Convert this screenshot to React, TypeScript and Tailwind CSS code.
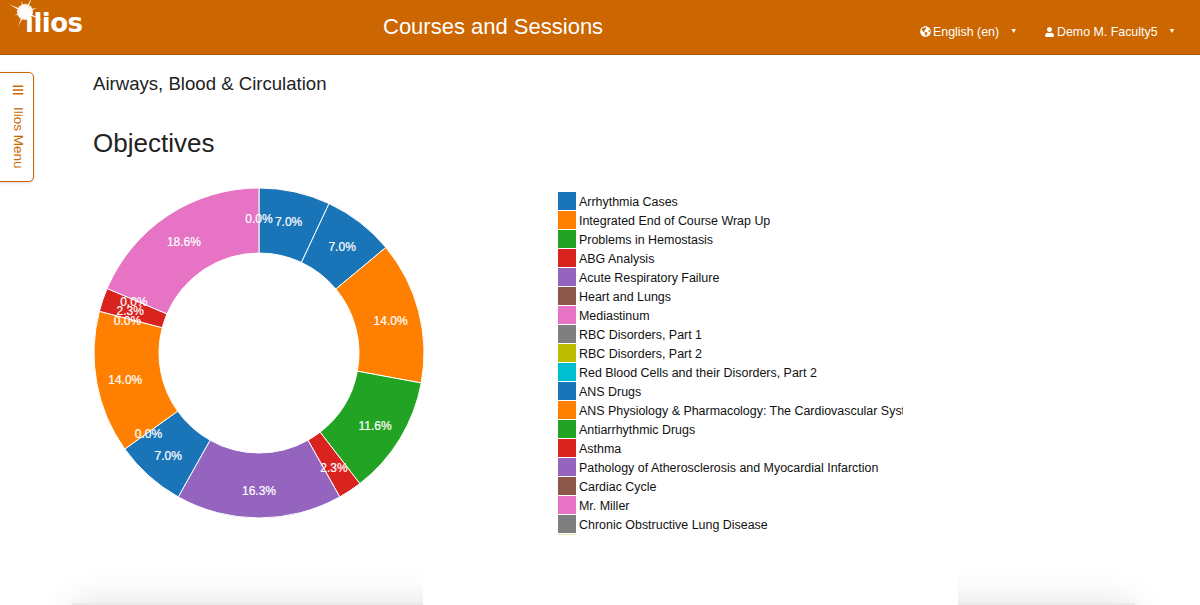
import { FaBars, FaGlobeAmericas, FaUser } from "react-icons/fa";

const slices = [
  { n: 0, color: "#e673c3" },
  { n: 3, color: "#1a75b8" },
  { n: 3, color: "#1a75b8" },
  { n: 6, color: "#ff7f00" },
  { n: 5, color: "#23a323" },
  { n: 1, color: "#d9231f" },
  { n: 7, color: "#9464bf" },
  { n: 3, color: "#1a75b8" },
  { n: 0, color: "#1a75b8" },
  { n: 6, color: "#ff7f00" },
  { n: 0, color: "#ff7f00" },
  { n: 1, color: "#d9231f" },
  { n: 0, color: "#d9231f" },
  { n: 8, color: "#e673c3" },
];

const legend = [
  { name: "Arrhythmia Cases", color: "#1a75b8" },
  { name: "Integrated End of Course Wrap Up", color: "#ff7f00" },
  { name: "Problems in Hemostasis", color: "#23a323" },
  { name: "ABG Analysis", color: "#d9231f" },
  { name: "Acute Respiratory Failure", color: "#9464bf" },
  { name: "Heart and Lungs", color: "#8c564b" },
  { name: "Mediastinum", color: "#e673c3" },
  { name: "RBC Disorders, Part 1", color: "#7f7f7f" },
  { name: "RBC Disorders, Part 2", color: "#bcbd00" },
  { name: "Red Blood Cells and their Disorders, Part 2", color: "#00bed1" },
  { name: "ANS Drugs", color: "#1a75b8" },
  { name: "ANS Physiology & Pharmacology: The Cardiovascular System", color: "#ff7f00" },
  { name: "Antiarrhythmic Drugs", color: "#23a323" },
  { name: "Asthma", color: "#d9231f" },
  { name: "Pathology of Atherosclerosis and Myocardial Infarction", color: "#9464bf" },
  { name: "Cardiac Cycle", color: "#8c564b" },
  { name: "Mr. Miller", color: "#e673c3" },
  { name: "Chronic Obstructive Lung Disease", color: "#7f7f7f" },
  { name: "", color: "#e6e6a8" },
];

const TOTAL = 43;
const CX = 166;
const CY = 166;
const OUTER = 165;
const INNER = 100;
const LABEL_R = 136;

function point(r: number, units: number) {
  const a = (units / TOTAL) * Math.PI * 2;
  return `${(CX + r * Math.sin(a)).toFixed(2)} ${(CY - r * Math.cos(a)).toFixed(2)}`;
}

function Donut() {
  let at = 0;
  const parts = slices.map((s) => {
    const start = at;
    at += s.n;
    return { ...s, start, end: at };
  });

  return (
    <svg width="332" height="332" viewBox="0 0 332 332" className="block shrink-0">
      {parts
        .filter((p) => p.n > 0)
        .map((p) => (
          <path
            key={p.start}
            fill={p.color}
            stroke="#fff"
            strokeWidth="1"
            d={`M${point(OUTER, p.start)}A${OUTER} ${OUTER} 0 ${p.n > TOTAL / 2 ? 1 : 0} 1 ${point(OUTER, p.end)}L${point(INNER, p.end)}A${INNER} ${INNER} 0 ${p.n > TOTAL / 2 ? 1 : 0} 0 ${point(INNER, p.start)}Z`}
          />
        ))}
      {parts.map((p, i) => {
        const a = (((p.start + p.end) / 2) / TOTAL) * Math.PI * 2;
        return (
          <text
            key={i}
            x={CX + LABEL_R * Math.sin(a)}
            y={CY - LABEL_R * Math.cos(a) + 6}
            textAnchor="middle"
            fill="#fff"
            stroke="#fff"
            strokeWidth="0.2"
            fontSize="12"
            fontFamily="'Liberation Sans', sans-serif"
          >
            {((p.n / TOTAL) * 100).toFixed(1)}%
          </text>
        );
      })}
    </svg>
  );
}

// spikes of the sun behind the logo, outer radius per ray
const rays = [17, 9, 13, 8, 20, 9, 12, 8, 16, 8, 11, 9, 18, 8, 12, 9];

function Logo() {
  const pts = rays
    .flatMap((r, i) => {
      const a = (i / rays.length) * Math.PI * 2 + 0.45;
      const b = a + Math.PI / rays.length;
      return [
        `${(25 + r * Math.sin(a)).toFixed(1)},${(12 - r * Math.cos(a)).toFixed(1)}`,
        `${(25 + 5 * Math.sin(b)).toFixed(1)},${(12 - 5 * Math.cos(b)).toFixed(1)}`,
      ];
    })
    .join(" ");

  return (
    <div className="relative h-[54px] w-[383px] shrink-0">
      <span className="absolute left-[25px] top-[8px] font-['DejaVu_Sans',sans-serif] text-[26px] leading-[30px] font-bold tracking-[-0.5px] text-white">
        ilios
      </span>
      <svg width="50" height="34" viewBox="0 0 50 34" className="absolute left-0 top-0">
        <polygon points={pts} fill="#fff" opacity="0.9" />
        <circle cx="25" cy="12" r="8" fill="#fff" opacity="0.85" />
      </svg>
    </div>
  );
}

function Caret() {
  return <span className="ml-[11px] mb-[3px] text-[7px] leading-none text-white">▼</span>;
}

export default function App() {
  return (
    <div className="relative h-[605px] w-[1200px] overflow-hidden bg-white font-['Liberation_Sans',sans-serif] text-[#222]">
      <header className="flex h-[55px] items-center border-b border-[#a85500] bg-[#cc6600] text-white">
        <Logo />
        <h1 className="w-[537px] shrink-0 text-[22px] leading-[28px]">Courses and Sessions</h1>
        <div className="flex w-[125px] shrink-0 items-center pt-[10px] text-[12.4px]">
          <FaGlobeAmericas className="mr-[2px] h-[11px] w-[11px]" />
          <span>English (en)</span>
          <Caret />
        </div>
        <div className="flex shrink-0 items-center pt-[10px] text-[12.4px]">
          <FaUser className="mr-[3px] h-[10px] w-[9px]" />
          <span>Demo M. Faculty5</span>
          <Caret />
        </div>
      </header>

      <aside className="absolute left-[-6px] top-[72px] flex h-[110px] w-[40px] flex-col items-center rounded-[5px] border border-[#cc6600] bg-white pt-[11px] pl-[7px] text-[#cc6600] shadow-[0_1px_3px_rgba(0,0,0,0.15)]">
        <FaBars className="h-[12px] w-[12px]" />
        <span className="mt-[11px] text-[13.5px] leading-[16px] [writing-mode:vertical-rl]">Ilios Menu</span>
      </aside>

      <main className="pl-[93px]">
        <h2 className="pt-[16px] text-[18.6px] leading-[26px]">Airways, Blood &amp; Circulation</h2>
        <h3 className="mt-[30px] text-[26px] leading-[32px]">Objectives</h3>
        <div className="mt-[24px] flex">
          <div className="pt-[4px]">
            <Donut />
          </div>
          <ul className="ml-[133px] mt-[9px] h-[343px] w-[345px] overflow-hidden">
            {legend.map((item) => (
              <li key={item.color + item.name} className="flex h-[19px] items-start">
                <span className="h-[18px] w-[18px] shrink-0" style={{ backgroundColor: item.color }} />
                <span className="ml-[3px] mt-px whitespace-nowrap text-[12.45px] leading-[18px] text-[#111]">{item.name}</span>
              </li>
            ))}
          </ul>
        </div>
      </main>

      <div className="absolute left-[72px] top-[603px] h-[40px] w-[1063px] bg-[#ebebeb] shadow-[0_0_36px_rgba(0,0,0,0.12)]" />
      <div className="absolute left-[423px] top-[560px] h-[45px] w-[535px] bg-white" />
    </div>
  );
}
